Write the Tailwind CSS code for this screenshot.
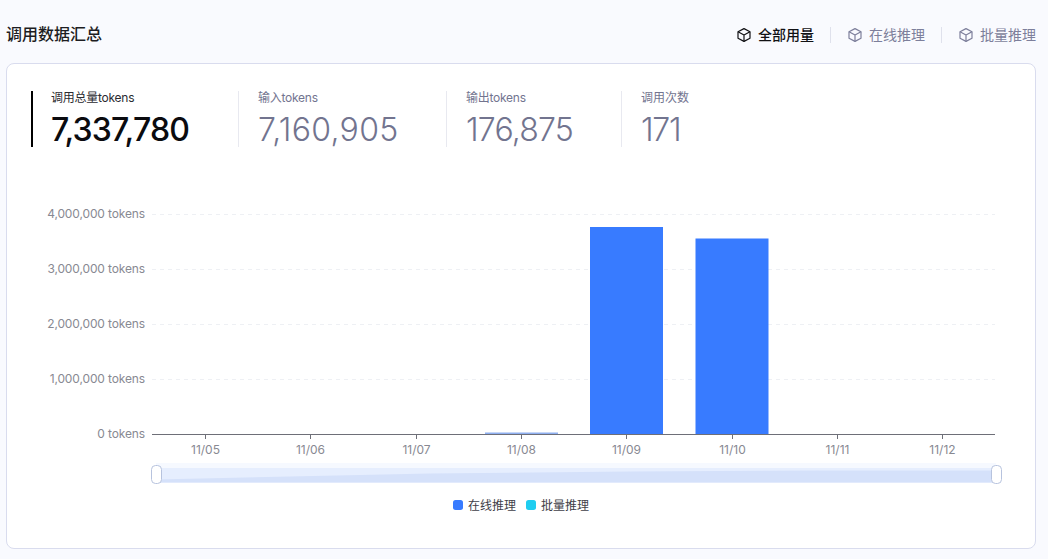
<!DOCTYPE html>
<html lang="en">
  <head>
    <meta charset="UTF-8" />
    <title>调用数据汇总</title>
    <script src="https://cdn.jsdelivr.net/npm/@tailwindcss/browser@4"></script>
  </head>
  <body class="w-[1048px] h-[559px] overflow-hidden bg-[#f9fafe] font-['Inter','Noto_Sans_CJK_SC',sans-serif]">
    <!-- header -->
    <div class="h-[63px] pl-[6px] pr-3 flex items-center justify-between pt-[6px]">
      <h2 class="text-base leading-6 font-medium text-[#1d1d22] -mt-px">调用数据汇总</h2>
      <div class="flex items-center text-sm text-[#7d7f9b]">
        <div class="flex items-center gap-[7px] text-[#111114] font-medium">
          <svg class="w-[14px] h-[14px]" viewBox="0 0 14 14" fill="none" stroke="currentColor" stroke-width="1.2" stroke-linejoin="round"><path d="M7 .6 13 3.8v6.4L7 13.4 1 10.2V3.8z" /><path d="M1 3.8 7 7l6-3.2M7 7v6.4" /></svg>
          全部用量
        </div>
        <div class="w-px h-4 bg-[#dfe1ec] ml-4 mr-[17px]"></div>
        <div class="flex items-center gap-[7px]">
          <svg class="w-[14px] h-[14px]" viewBox="0 0 14 14" fill="none" stroke="currentColor" stroke-width="1.2" stroke-linejoin="round"><path d="M7 .6 13 3.8v6.4L7 13.4 1 10.2V3.8z" /><path d="M1 3.8 7 7l6-3.2M7 7v6.4" /></svg>
          在线推理
        </div>
        <div class="w-px h-4 bg-[#dfe1ec] ml-4 mr-[17px]"></div>
        <div class="flex items-center gap-[7px]">
          <svg class="w-[14px] h-[14px]" viewBox="0 0 14 14" fill="none" stroke="currentColor" stroke-width="1.2" stroke-linejoin="round"><path d="M7 .6 13 3.8v6.4L7 13.4 1 10.2V3.8z" /><path d="M1 3.8 7 7l6-3.2M7 7v6.4" /></svg>
          批量推理
        </div>
      </div>
    </div>

    <!-- card -->
    <div class="ml-[6px] w-[1030px] h-[486px] bg-white border border-[#d9dcee] rounded-lg relative">
      <div class="flex pt-[27px] pl-6">
        <div class="w-[207px] h-14 border-l-2 border-black pl-[18px]">
          <div class="text-xs leading-[14px] tracking-[-0.25px] text-[#2a2a30]">调用总量tokens</div>
          <div class="text-[32px] leading-[36px] mt-[7px] font-medium tracking-[-0.8px] text-[#0b0b0f]">7,337,780</div>
        </div>
        <div class="w-[208px] h-14 border-l border-[#e8e9f0] pl-[19px] text-[#72748f]">
          <div class="text-xs leading-[14px] tracking-[-0.25px]">输入tokens</div>
          <div class="text-[32px] leading-[36px] mt-[7px] font-light tracking-[0.3px]">7,160,905</div>
        </div>
        <div class="w-[175px] h-14 border-l border-[#e8e9f0] pl-[19px] text-[#72748f]">
          <div class="text-xs leading-[14px] tracking-[-0.25px]">输出tokens</div>
          <div class="text-[32px] leading-[36px] mt-[7px] font-light tracking-[-0.8px]">176,875</div>
        </div>
        <div class="w-[175px] h-14 border-l border-[#e8e9f0] pl-[19px] text-[#72748f]">
          <div class="text-xs leading-[14px]">调用次数</div>
          <div class="text-[32px] leading-[36px] mt-[7px] font-light tracking-[-1.3px]">171</div>
        </div>
      </div>

      <svg class="block mt-[40px]" width="1028" height="340" viewBox="7 187 1028 340" fill="#888992" font-size="12">
        <g stroke="#eef0f4" stroke-dasharray="4 4">
          <line x1="152" x2="995" y1="214.5" y2="214.5" />
          <line x1="152" x2="995" y1="269.5" y2="269.5" />
          <line x1="152" x2="995" y1="324.5" y2="324.5" />
          <line x1="152" x2="995" y1="379.5" y2="379.5" />
        </g>
        <g text-anchor="end" letter-spacing="-0.13">
          <text x="145" y="218">4,000,000 tokens</text>
          <text x="145" y="273">3,000,000 tokens</text>
          <text x="145" y="328">2,000,000 tokens</text>
          <text x="145" y="383">1,000,000 tokens</text>
          <text x="145" y="438">0 tokens</text>
        </g>
        <rect x="485" y="432.5" width="73" height="1.5" fill="#8fb0f0" />
        <rect x="590" y="227" width="73" height="207" fill="#387bff" />
        <rect x="695.5" y="238.5" width="73" height="195.5" fill="#387bff" />
        <line x1="152" x2="995" y1="434.5" y2="434.5" stroke="#6e6f78" />
        <g stroke="#6e6f78">
          <line x1="205.5" x2="205.5" y1="434" y2="439" />
          <line x1="310.5" x2="310.5" y1="434" y2="439" />
          <line x1="416.5" x2="416.5" y1="434" y2="439" />
          <line x1="521.5" x2="521.5" y1="434" y2="439" />
          <line x1="626.5" x2="626.5" y1="434" y2="439" />
          <line x1="732.5" x2="732.5" y1="434" y2="439" />
          <line x1="837.5" x2="837.5" y1="434" y2="439" />
          <line x1="942.5" x2="942.5" y1="434" y2="439" />
        </g>
        <g text-anchor="middle">
          <text x="205.5" y="454">11/05</text>
          <text x="310.5" y="454">11/06</text>
          <text x="416.5" y="454">11/07</text>
          <text x="521.5" y="454">11/08</text>
          <text x="626.5" y="454">11/09</text>
          <text x="732.5" y="454">11/10</text>
          <text x="837.5" y="454">11/11</text>
          <text x="942.5" y="454">11/12</text>
        </g>
        <rect x="156" y="463" width="840" height="20" fill="#f6f9ff" />
        <rect x="156" y="468" width="840" height="14.5" fill="#e6eefe" />
        <path d="M156 482.5 V479.5 L430 473.5 L630 471.5 L820 470.5 H996 V482.5 Z" fill="#d5e1fa" />
        <rect x="151.5" y="465.5" width="10" height="18" rx="4" fill="#fff" stroke="#b7c3de" />
        <rect x="991.5" y="465.5" width="10" height="18" rx="4" fill="#fff" stroke="#b7c3de" />
        <rect x="453" y="500" width="10" height="10" rx="2.5" fill="#387bff" />
        <text x="468" y="510" fill="#3f4048">在线推理</text>
        <rect x="526" y="500" width="10" height="10" rx="2.5" fill="#1fcdf0" />
        <text x="541" y="510" fill="#3f4048">批量推理</text>
      </svg>
    </div>
  </body>
</html>
